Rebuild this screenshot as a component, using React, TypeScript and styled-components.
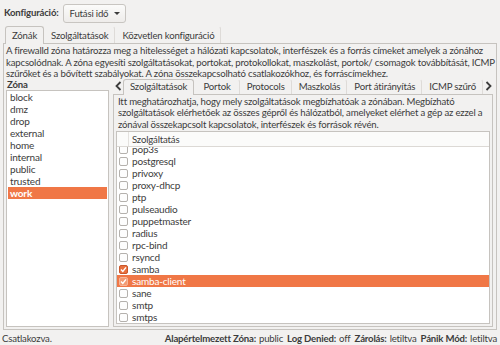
import React from "react";
import styled, { createGlobalStyle } from "styled-components";

const GlobalStyle = createGlobalStyle`
  html, body {
    margin: 0;
    padding: 0;
    background: #f2f1f0;
  }
  body {
    font-family: "Lato", "DejaVu Sans", sans-serif;
    font-size: 9.6px;
    letter-spacing: -0.18px;
    color: #3c3c3c;
  }
`;

const Window = styled.div`
  width: 500px;
  height: 345px;
  display: flex;
  flex-direction: column;
  overflow: hidden;
  background: #f2f1f0;
`;

const TopBar = styled.div`
  height: 25px;
  display: flex;
  align-items: center;
  gap: 4px;
  padding: 0 4px;
  box-sizing: border-box;
`;

const Bold = styled.span`
  font-weight: 700;
`;

const Combo = styled.div`
  height: 19px;
  box-sizing: border-box;
  border: 1px solid #c8c5c1;
  border-radius: 3px;
  background: linear-gradient(#fbfbfa, #eeecea);
  display: flex;
  align-items: center;
  gap: 6px;
  padding: 0 5px 0 6px;
  margin-top: 1px;
  white-space: nowrap;
`;

const Caret = styled.span`
  width: 0;
  height: 0;
  border-left: 3px solid transparent;
  border-right: 3px solid transparent;
  border-top: 3px solid #3c3c3c;
`;

const Notebook = styled.div`
  flex: 1;
  display: flex;
  flex-direction: column;
  padding: 0 3px;
  min-height: 0;
`;

const TabRow = styled.div<{ $inner?: boolean }>`
  display: flex;
  align-items: flex-end;
  height: ${(p) => (p.$inner ? 16 : 18)}px;
  padding-left: ${(p) => (p.$inner ? 0 : 2)}px;
  position: relative;
  z-index: 1;
`;

const Tab = styled.div<{ $active?: boolean; $grow?: boolean }>`
  height: ${(p) => (p.$active ? "100%" : "calc(100% - 1px)")};
  box-sizing: border-box;
  padding: 0 6px;
  flex: ${(p) => (p.$grow ? 1 : "none")};
  justify-content: center;
  display: flex;
  align-items: center;
  white-space: nowrap;
  border: 1px solid ${(p) => (p.$active ? "#c6c3bf" : "transparent")};
  border-bottom: none;
  border-right-color: ${(p) => (p.$active ? "#c6c3bf" : "#dedbd8")};
  border-radius: 3px 3px 0 0;
  background: #f2f1f0;
  margin-bottom: ${(p) => (p.$active ? "-1px" : "0")};
  padding-bottom: ${(p) => (p.$active ? "1px" : "0")};
`;

const Arrow = styled.div`
  width: 10px;
  align-self: center;
  display: flex;
  justify-content: center;
  margin-top: 1px;
  flex-shrink: 0;
`;

const Panel = styled.div`
  flex: 1;
  border: 1px solid #c6c3bf;
  display: flex;
  flex-direction: column;
  min-height: 0;
`;

const Description = styled.div`
  padding: 1px 2px 0 2px;
  line-height: 11.5px;
  white-space: nowrap;
`;

const Body = styled.div`
  flex: 1;
  display: flex;
  gap: 4px;
  padding: 0 2px 2px 2px;
  min-height: 0;
`;

const ZoneColumn = styled.div`
  width: 103px;
  display: flex;
  flex-direction: column;
`;

const ZoneLabel = styled.div`
  font-weight: 700;
  height: 10px;
  line-height: 10px;
  padding-left: 1px;
`;

const ListBox = styled.div`
  flex: 1;
  background: #fff;
  border: 1px solid #c6c3bf;
  padding: 0 1px;
`;

const ListItem = styled.div<{ $selected?: boolean }>`
  height: 12px;
  line-height: 12px;
  padding-left: 2px;
  font-size: 10px;
  background: ${(p) => (p.$selected ? "#f07746" : "transparent")};
  color: ${(p) => (p.$selected ? "#fff" : "#3c3c3c")};
  font-weight: ${(p) => (p.$selected ? 700 : 400)};
`;

const InnerNotebook = styled.div`
  flex: 1;
  display: flex;
  flex-direction: column;
  margin-top: -2px;
  margin-right: 1px;
  min-width: 0;
`;

const InnerPanel = styled(Panel)`
  padding: 0 2px 2px 2px;
`;

const TreeView = styled.div`
  flex: 1;
  display: flex;
  flex-direction: column;
  border: 1px solid #c6c3bf;
  background: #fff;
  margin-top: 1px;
  min-height: 0;
`;

const TreeHeader = styled.div`
  height: 14px;
  display: flex;
  border-bottom: 1px solid #dcd9d5;
  background: #fbfbfa;
  flex-shrink: 0;
  position: relative;
  z-index: 1;
`;

const HeaderCell = styled.div<{ $w?: number }>`
  width: ${(p) => (p.$w ? `${p.$w}px` : "auto")};
  flex: ${(p) => (p.$w ? "none" : 1)};
  display: flex;
  align-items: center;
  padding-left: ${(p) => (p.$w ? 0 : 3)}px;
  border-right: ${(p) => (p.$w ? "1px solid #e4e2df" : "none")};
`;

const Rows = styled.div`
  flex: 1;
  overflow: hidden;
`;

const RowsInner = styled.div`
  margin-top: -4px;
`;

const Row = styled.div<{ $selected?: boolean }>`
  height: 12px;
  display: flex;
  align-items: center;
  gap: 4px;
  padding-left: 2px;
  font-size: 10px;
  white-space: nowrap;
  background: ${(p) => (p.$selected ? "#f07746" : "transparent")};
  color: ${(p) => (p.$selected ? "#fff" : "#3c3c3c")};
`;

const Check = styled.span<{ $checked?: boolean; $onSel?: boolean }>`
  width: 9px;
  height: 9px;
  box-sizing: border-box;
  border-radius: 2px;
  border: 1px solid
    ${(p) => (p.$onSel ? "#f6b597" : p.$checked ? "#c9562a" : "#b4b1ad")};
  background: ${(p) =>
    p.$onSel ? "#f39a72" : p.$checked ? "#e8703e" : "#fdfdfd"};
  display: flex;
  align-items: center;
  justify-content: center;
  flex-shrink: 0;
`;

const StatusBar = styled.div`
  height: 15px;
  display: flex;
  align-items: center;
  justify-content: space-between;
  padding: 2px 3px 0 2px;
  box-sizing: border-box;
  white-space: nowrap;
`;

const StatusRight = styled.div`
  display: flex;
  gap: 3px;
`;

const Value = styled.span`
  margin-right: 1px;
`;

const zones = ["block", "dmz", "drop", "external", "home", "internal", "public", "trusted", "work"];

const services: { name: string; checked?: boolean; selected?: boolean }[] = [
  { name: "pop3s" },
  { name: "postgresql" },
  { name: "privoxy" },
  { name: "proxy-dhcp" },
  { name: "ptp" },
  { name: "pulseaudio" },
  { name: "puppetmaster" },
  { name: "radius" },
  { name: "rpc-bind" },
  { name: "rsyncd" },
  { name: "samba", checked: true },
  { name: "samba-client", checked: true, selected: true },
  { name: "sane" },
  { name: "smtp" },
  { name: "smtps" },
];

const CheckMark = () => (
  <svg width="7" height="7" viewBox="0 0 7 7">
    <polyline points="1,3.6 2.8,5.4 6,1.4" fill="none" stroke="#fff" strokeWidth="1.4" />
  </svg>
);

const Chevron = ({ dir }: { dir: "left" | "right" }) => (
  <svg width="7" height="10" viewBox="0 0 7 10">
    <polyline
      points={dir === "left" ? "5.5,1 1.5,5 5.5,9" : "1.5,1 5.5,5 1.5,9"}
      fill="none"
      stroke="#3c3c3c"
      strokeWidth="1.8"
    />
  </svg>
);

export default function App() {
  return (
    <Window>
      <GlobalStyle />
      <TopBar>
        <Bold>Konfiguráció:</Bold>
        <Combo>
          <span>Futási idő</span>
          <Caret />
        </Combo>
      </TopBar>
      <Notebook>
        <TabRow>
          <Tab $active>Zónák</Tab>
          <Tab>Szolgáltatások</Tab>
          <Tab>Közvetlen konfiguráció</Tab>
        </TabRow>
        <Panel>
          <Description>
            A firewalld zóna határozza meg a hitelességet a hálózati kapcsolatok, interfészek és a forrás címeket amelyek a zónához
            <br />
            kapcsolódnak. A zóna egyesíti szolgáltatásokat, portokat, protokollokat, maszkolást, portok/ csomagok továbbítását, ICMP
            <br />
            szűrőket és a bővített szabályokat. A zóna összekapcsolható csatlakozókhoz, és forráscímekhez.
          </Description>
          <Body>
            <ZoneColumn>
              <ZoneLabel>Zóna</ZoneLabel>
              <ListBox>
                {zones.map((z) => (
                  <ListItem key={z} $selected={z === "work"}>
                    {z}
                  </ListItem>
                ))}
              </ListBox>
            </ZoneColumn>
            <InnerNotebook>
              <TabRow $inner>
                <Arrow>
                  <Chevron dir="left" />
                </Arrow>
                <Tab $active>Szolgáltatások</Tab>
                <Tab $grow>Portok</Tab>
                <Tab $grow>Protocols</Tab>
                <Tab $grow>Maszkolás</Tab>
                <Tab $grow>Port átirányítás</Tab>
                <Tab $grow>ICMP szűrő</Tab>
                <Arrow>
                  <Chevron dir="right" />
                </Arrow>
              </TabRow>
              <InnerPanel>
                <Description>
                  Itt meghatározhatja, hogy mely szolgáltatások megbízhatóak a zónában. Megbízható
                  <br />
                  szolgáltatások elérhetőek az összes gépről és hálózatból, amelyeket elérhet a gép az ezzel a
                  <br />
                  zónával összekapcsolt kapcsolatok, interfészek és források révén.
                </Description>
                <TreeView>
                  <TreeHeader>
                    <HeaderCell $w={11} />
                    <HeaderCell>Szolgáltatás</HeaderCell>
                  </TreeHeader>
                  <Rows>
                    <RowsInner>
                      {services.map((s) => (
                        <Row key={s.name} $selected={s.selected}>
                          <Check $checked={s.checked} $onSel={s.selected}>
                            {s.checked && <CheckMark />}
                          </Check>
                          <span>{s.name}</span>
                        </Row>
                      ))}
                    </RowsInner>
                  </Rows>
                </TreeView>
              </InnerPanel>
            </InnerNotebook>
          </Body>
        </Panel>
      </Notebook>
      <StatusBar>
        <span>Csatlakozva.</span>
        <StatusRight>
          <Bold>Alapértelmezett Zóna:</Bold>
          <Value>public</Value>
          <Bold>Log Denied:</Bold>
          <Value>off</Value>
          <Bold>Zárolás:</Bold>
          <Value>letiltva</Value>
          <Bold>Pánik Mód:</Bold>
          <span>letiltva</span>
        </StatusRight>
      </StatusBar>
    </Window>
  );
}
